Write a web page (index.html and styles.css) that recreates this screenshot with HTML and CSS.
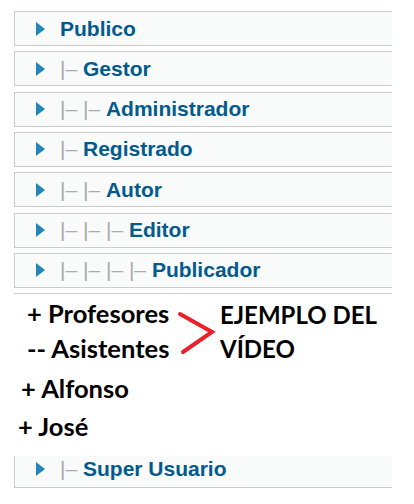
FILE: index.html
```html
<!DOCTYPE html>
<html lang="es">
<head>
  <meta charset="UTF-8">
  <meta name="viewport" content="width=device-width, initial-scale=1.0">
  <title>Grupos de usuarios</title>
  <link rel="stylesheet" href="styles.css">
</head>
<body>
<!-- Group tree -->
<ul class="groups">
  <li class="group"><span class="arrow"></span><span class="name"><a href="#">Publico</a></span></li>
  <li class="group"><span class="arrow"></span><span class="name"><span class="gi">|&ndash; </span><a href="#">Gestor</a></span></li>
  <li class="group"><span class="arrow"></span><span class="name"><span class="gi">|&ndash; |&ndash; </span><a href="#">Administrador</a></span></li>
  <li class="group"><span class="arrow"></span><span class="name"><span class="gi">|&ndash; </span><a href="#">Registrado</a></span></li>
  <li class="group"><span class="arrow"></span><span class="name"><span class="gi">|&ndash; |&ndash; </span><a href="#">Autor</a></span></li>
  <li class="group"><span class="arrow"></span><span class="name"><span class="gi">|&ndash; |&ndash; |&ndash; </span><a href="#">Editor</a></span></li>
  <li class="group"><span class="arrow"></span><span class="name"><span class="gi">|&ndash; |&ndash; |&ndash; |&ndash; </span><a href="#">Publicador</a></span></li>
  <li class="group cut"></li>
</ul>

<!-- Pasted note -->
<div class="note">
  <div class="note-top">
    <div class="roles">
      <div class="line">+ Profesores</div>
      <div class="line">-- Asistentes</div>
    </div>
    <svg class="chevron" width="40" height="46" viewBox="0 0 40 46">
      <polyline points="3,4 35,22 6,42" fill="none" stroke="#e8212b" stroke-width="4" stroke-linecap="round" stroke-linejoin="miter"/>
    </svg>
    <div class="example">EJEMPLO DEL<br>VÍDEO</div>
  </div>
  <div class="line alfonso">+ Alfonso</div>
  <div class="line jose">+ José</div>
</div>

<ul class="groups bottom">
  <li class="group last"><span class="arrow"></span><span class="name"><span class="gi">|&ndash; </span><a href="#">Super Usuario</a></span></li>
</ul>
</body>
</html>
```

FILE: styles.css
```css
body {
    margin: 0;
    background-color: white;
    font-family: "Liberation Sans", Arial, sans-serif;
}
.groups {
    list-style: none;
    margin: 0;
    padding: 11px 22px 0 14px;
}
.group {
    box-sizing: border-box;
    display: flex;
    align-items: center;
    height: 35px;
    margin-bottom: 5.33px;
    background-color: #f9fafa;
    border-top: 1px solid #cccccc;
    border-bottom: 1px solid #cccccc;
    border-left: 1px solid #cccccc;
    font-size: 21px;
    line-height: 32px;
    white-space: pre;
}
.group a {
    color: #025a8d;
    font-weight: bold;
    text-decoration: none;
}
.gi {
    color: #aaaaaa;
}
.arrow {
    width: 0;
    height: 0;
    margin: 0 15px 0 21px;
    border-top: 7px solid transparent;
    border-bottom: 7px solid transparent;
    border-left: 9px solid #2386b8;
}
.cut {
    height: 1px;
    margin: 0;
    border-bottom: none;
    border-left: none;
    background: none;
}
.bottom {
    padding-top: 0;
}
.last {
    height: 32px;
    margin: 0;
    border-top: none;
    padding-bottom: 6px;
}

.note {
    height: 162px;
    font-family: Lato, "Open Sans", sans-serif;
    font-weight: bold;
    font-size: 25.5px;
    color: black;
}
.note-top {
    display: flex;
    align-items: flex-start;
}
.roles {
    padding: 2px 0 0 27px;
    width: 148px;
}
.line {
    line-height: 35px;
}
.chevron {
    margin: 16px 0 0 2px;
}
.example {
    margin: 4px 0 0 3px;
    font-size: 24px;
    line-height: 34px;
}
.alfonso {
    padding-left: 21px;
    margin-top: 5px;
}
.jose {
    padding-left: 18px;
    margin-top: 3px;
}
```
